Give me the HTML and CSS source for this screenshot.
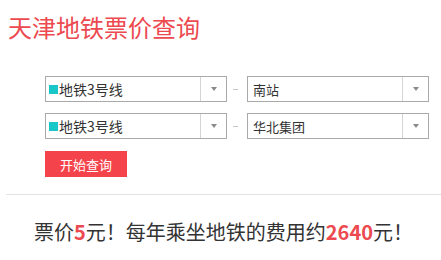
FILE: index.html
```html
<!DOCTYPE html>
<html lang="zh-CN">
<head>
<meta charset="utf-8">
<title>天津地铁票价查询</title>
<link rel="stylesheet" href="styles.css">
</head>
<body>
<h1 class="title">天津地铁票价查询</h1>
<div class="form">
  <div class="row">
    <div class="select">
      <div class="value line"><span class="swatch"></span>地铁3号线</div>
      <div class="arrow"><span class="tri"></span></div>
    </div>
    <span class="dash"></span>
    <div class="select">
      <div class="value plain">南站</div>
      <div class="arrow"><span class="tri"></span></div>
    </div>
  </div>
  <div class="row">
    <div class="select">
      <div class="value line"><span class="swatch"></span>地铁3号线</div>
      <div class="arrow"><span class="tri"></span></div>
    </div>
    <span class="dash"></span>
    <div class="select">
      <div class="value plain">华北集团</div>
      <div class="arrow"><span class="tri"></span></div>
    </div>
  </div>
  <button class="btn">开始查询</button>
</div>
<div class="result-wrap">
  <p class="result">票价<b>5</b>元！每年乘坐地铁的费用约<b>2640</b>元！</p>
</div>
</body>
</html>
```
FILE: styles.css
```css
html, body {
  margin: 0;
  padding: 0;
  background: #fff;
  font-family: "Noto Sans CJK SC", "Noto Sans", sans-serif;
  color: #333;
}
.title {
  margin: 0;
  padding: 13px 0 0 8px;
  font-size: 24px;
  line-height: 28px;
  font-weight: normal;
  color: #ec4a50;
}
.form {
  margin-top: 35px;
  padding-left: 45px;
  display: flex;
  flex-direction: column;
  align-items: flex-start;
}
.row {
  display: flex;
  align-items: center;
  margin-bottom: 11px;
}
.select {
  width: 182px;
  height: 26px;
  box-sizing: border-box;
  border: 1px solid #a9a9a9;
  display: flex;
  background: #fff;
}
.value {
  flex: 1;
  display: flex;
  align-items: center;
  padding-left: 3px;
  font-size: 13px;
  color: #333;
}
.value.line {
  font-size: 14px;
}
.value.plain {
  padding-left: 5px;
}
.swatch {
  width: 9px;
  height: 9px;
  background: #19c6c8;
  margin-right: 1px;
}
.arrow {
  width: 25px;
  border-left: 1px solid #d4d4d4;
  display: flex;
  align-items: center;
  justify-content: center;
}
.tri {
  width: 0;
  height: 0;
  border-top: 4px solid #8a8a8a;
  border-left: 3.5px solid transparent;
  border-right: 3.5px solid transparent;
}
.dash {
  width: 5px;
  height: 1px;
  background: #c8c8c8;
  margin: 0 9px 0 6px;
}
.btn {
  margin-top: 1px;
  width: 82px;
  height: 26px;
  border: none;
  padding: 0;
  background: #f5434b;
  color: #fff;
  font-family: "Noto Sans CJK SC", sans-serif;
  font-size: 13px;
}
.result-wrap {
  margin: 17px 0 0 6px;
  border-top: 1px solid #e3e3e3;
}
.result {
  margin: 25px 0 0;
  text-align: center;
  font-size: 20px;
  line-height: 24px;
  color: #333;
}
.result b {
  color: #ec4a50;
  font-weight: bold;
}
```
